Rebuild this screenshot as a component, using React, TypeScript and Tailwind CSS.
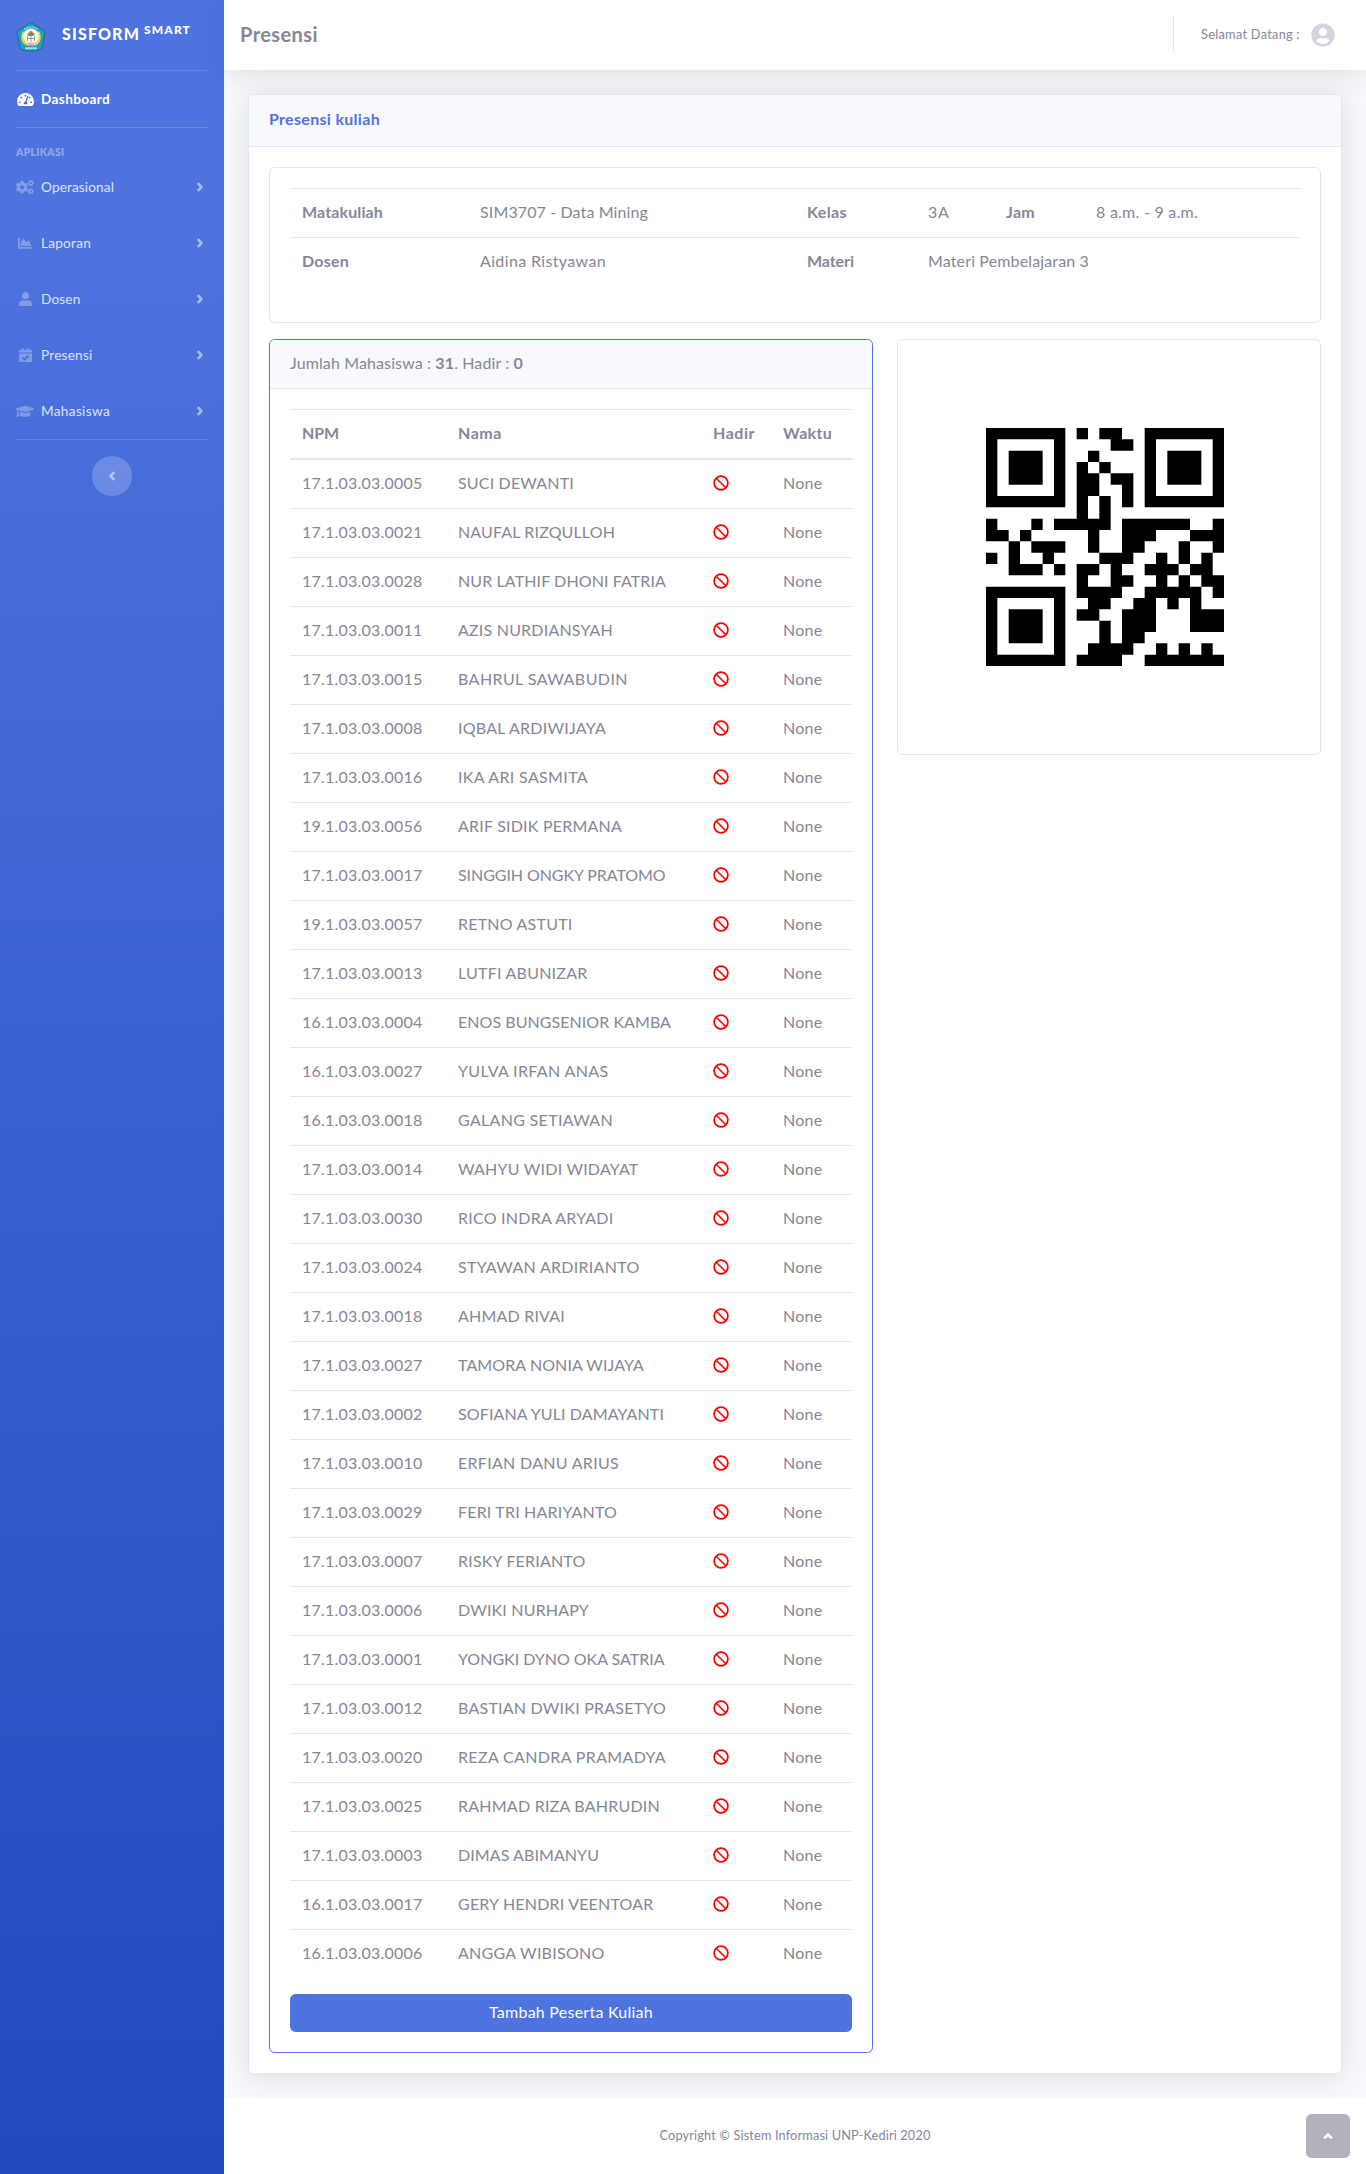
import { useLayoutEffect, useRef, useState } from "react";
import type { ReactNode } from "react";
import {
  FaCalendarCheck,
  FaChartArea,
  FaCogs,
  FaGraduationCap,
  FaTachometerAlt,
  FaUser,
  FaUserCircle,
} from "react-icons/fa";

/** One line of text whose tracking is adjusted so that it fills `w` pixels. */
function Fit({ w, className = "-top-px", children }: { w: number; className?: string; children: ReactNode }) {
  const ref = useRef<HTMLSpanElement>(null);
  const [spacing, setSpacing] = useState(0);
  useLayoutEffect(() => {
    const el = ref.current;
    if (!el) return;
    el.style.letterSpacing = "0px";
    const count = (el.textContent ?? "").length;
    const next = (w - el.getBoundingClientRect().width) / Math.max(count, 1);
    el.style.letterSpacing = `${next}px`;
    setSpacing(next);
  }, [w]);
  return (
    <span
      ref={ref}
      className={`relative inline-block whitespace-nowrap ${className}`}
      style={{ letterSpacing: `${spacing}px` }}
    >
      {children}
    </span>
  );
}

const students: [string, string, number][] = [
  ["17.1.03.03.0005", "SUCI DEWANTI", 116],
  ["17.1.03.03.0021", "NAUFAL RIZQULLOH", 157],
  ["17.1.03.03.0028", "NUR LATHIF DHONI FATRIA", 208],
  ["17.1.03.03.0011", "AZIS NURDIANSYAH", 155],
  ["17.1.03.03.0015", "BAHRUL SAWABUDIN", 170],
  ["17.1.03.03.0008", "IQBAL ARDIWIJAYA", 148],
  ["17.1.03.03.0016", "IKA ARI SASMITA", 130],
  ["19.1.03.03.0056", "ARIF SIDIK PERMANA", 164],
  ["17.1.03.03.0017", "SINGGIH ONGKY PRATOMO", 207.5],
  ["19.1.03.03.0057", "RETNO ASTUTI", 114.5],
  ["17.1.03.03.0013", "LUTFI ABUNIZAR", 129.5],
  ["16.1.03.03.0004", "ENOS BUNGSENIOR KAMBA", 213],
  ["16.1.03.03.0027", "YULVA IRFAN ANAS", 150.5],
  ["16.1.03.03.0018", "GALANG SETIAWAN", 155],
  ["17.1.03.03.0014", "WAHYU WIDI WIDAYAT", 180.5],
  ["17.1.03.03.0030", "RICO INDRA ARYADI", 155.5],
  ["17.1.03.03.0024", "STYAWAN ARDIRIANTO", 181.5],
  ["17.1.03.03.0018", "AHMAD RIVAI", 107],
  ["17.1.03.03.0027", "TAMORA NONIA WIJAYA", 186],
  ["17.1.03.03.0002", "SOFIANA YULI DAMAYANTI", 206],
  ["17.1.03.03.0010", "ERFIAN DANU ARIUS", 161],
  ["17.1.03.03.0029", "FERI TRI HARIYANTO", 159],
  ["17.1.03.03.0007", "RISKY FERIANTO", 127.5],
  ["17.1.03.03.0006", "DWIKI NURHAPY", 131],
  ["17.1.03.03.0001", "YONGKI DYNO OKA SATRIA", 206.5],
  ["17.1.03.03.0012", "BASTIAN DWIKI PRASETYO", 208],
  ["17.1.03.03.0020", "REZA CANDRA PRAMADYA", 208],
  ["17.1.03.03.0025", "RAHMAD RIZA BAHRUDIN", 202],
  ["17.1.03.03.0003", "DIMAS ABIMANYU", 141],
  ["16.1.03.03.0017", "GERY HENDRI VEENTOAR", 195.5],
  ["16.1.03.03.0006", "ANGGA WIBISONO", 146.5],
];

const qrRows = [
  "111111101011001111111",
  "100000100001101000001",
  "101110100100001011101",
  "101110101010001011101",
  "101110101101101011101",
  "100000101100101000001",
  "111111101010101111111",
  "000000001010000000000",
  "100010111110111111001",
  "110100000100111000111",
  "001011100100110001001",
  "101001000011100101010",
  "001110101101001110110",
  "000000001001100101011",
  "111111101111001111101",
  "100000100110011010100",
  "101110101100111000111",
  "101110100010111000111",
  "101110100010110000000",
  "100000100111100101010",
  "111111101111001111111",
];

const qrPath = qrRows
  .flatMap((row, y) => [...row.matchAll(/1+/g)].map((m) => `M${m.index} ${y}h${m[0].length}v1h-${m[0].length}z`))
  .join("");

const menu = [
  { label: "Operasional", w: 73, Icon: FaCogs, size: "h-[14.5px] w-[18px]" },
  { label: "Laporan", w: 50, Icon: FaChartArea, size: "h-[14.5px] w-[14.5px]" },
  { label: "Dosen", w: 39.5, Icon: FaUser, size: "h-[14.5px] w-[13px]" },
  { label: "Presensi", w: 51.5, Icon: FaCalendarCheck, size: "h-[14.5px] w-[13px]" },
  { label: "Mahasiswa", w: 69, Icon: FaGraduationCap, size: "h-[14.5px] w-[18px]" },
];

function Chevron({ className }: { className: string }) {
  return (
    <svg viewBox="0 0 8 12" className={`h-3 w-2 ${className}`}>
      <path d="M1.700 2.200 5.500 6 1.700 9.800" fill="none" stroke="currentColor" strokeWidth="2.600" strokeLinejoin="round" />
    </svg>
  );
}

function Ban() {
  return (
    <svg viewBox="0 0 16 16" className="relative -top-px h-4 w-4 text-[#ff0000]">
      <circle cx="8" cy="8" r="6.900" fill="none" stroke="currentColor" strokeWidth="1.700" />
      <path d="M3.200 3.200 12.800 12.800" fill="none" stroke="currentColor" strokeWidth="1.600" />
    </svg>
  );
}

function Logo() {
  return (
    <svg viewBox="0 0 30 30" className="h-[30px] w-[30px]">
      <path d="M15 .6 29.2 9.500 25.800 27Q15 31.600 4.200 27L.8 9.500Z" fill="#12a3cf" stroke="#3f5f74" strokeWidth="1" strokeLinejoin="round" />
      <path d="M8 7.500Q15 2.500 22 7.500" fill="none" stroke="#bfe6f0" strokeWidth="1.300" strokeDasharray="1 .7" />
      <path d="M6.500 9.500Q2.500 20 11 23.800L15 22 19 23.800Q27.500 20 23.500 9.500Z" fill="#e6dc3c" />
      <circle cx="15" cy="14.300" r="7.800" fill="#fafafa" />
      <path d="M11 12.500Q15 7.500 19 12.500L17 14H13Z" fill="#55a35a" />
      <circle cx="15" cy="10.800" r="1.800" fill="#e05a3c" />
      <path d="M11.500 14v5M15 13v7M18.500 14v5M11.500 16.500H18.500" stroke="#858a8a" strokeWidth=".8" fill="none" />
      <path d="M11.500 20.500h7v3h-7z" fill="#f2aeb0" />
      <path d="M9.500 26.200H20.500" stroke="#e4f4f8" strokeWidth="2" strokeDasharray="1.400 .5" />
    </svg>
  );
}

function Sidebar() {
  return (
    <aside className="flex w-[224px] shrink-0 flex-col bg-linear-to-b from-[#4e73df] from-10% to-[#224abe] px-4">
      <div className="flex h-[70px] items-center">
        <div className="mt-[4px]">
          <Logo />
        </div>
        <div className="ml-4 flex items-start font-black text-white">
          <Fit w={78} className="-top-px text-[16px] leading-6">SISFORM</Fit>
          <Fit w={47} className="-top-[5px] ml-[4px] text-[12px] leading-6">SMART</Fit>
        </div>
      </div>
      <div className="h-px bg-white/15" />
      <div className="flex h-14 items-center text-white">
        <span className="flex w-[18px] justify-center">
          <FaTachometerAlt className="h-[15px] w-[17px]" />
        </span>
        <Fit w={69} className="top-0 ml-[7px] text-[13.6px] font-bold">Dashboard</Fit>
      </div>
      <div className="h-px bg-white/15" />
      <div className="flex h-8 items-end text-white/40">
        <Fit w={48.5} className="top-0 text-[10.4px] leading-4 font-black">APLIKASI</Fit>
      </div>
      <div className="-mt-px flex flex-col">
        {menu.map(({ label, w, Icon, size }) => (
          <div key={label} className="flex h-14 items-center text-white/80">
            <span className="flex w-[18px] justify-center text-white/30">
              <Icon className={`shrink-0 ${size}`} preserveAspectRatio="none" />
            </span>
            <Fit w={w} className="top-0 ml-[7px] text-[13.6px]">{label}</Fit>
            <Chevron className="mr-[4px] ml-auto text-white/50" />
          </div>
        ))}
      </div>
      <div className="h-px bg-white/15" />
      <div className="mt-4 flex h-10 w-10 items-center justify-center self-center rounded-full bg-white/20 text-white/50">
        <Chevron className="rotate-180" />
      </div>
    </aside>
  );
}

function InfoTable() {
  return (
    <table className="mb-4 w-full table-fixed border-collapse text-left">
      <colgroup>
        <col className="w-[178px]" />
        <col className="w-[327px]" />
        <col className="w-[121px]" />
        <col className="w-[78px]" />
        <col className="w-[90px]" />
        <col />
      </colgroup>
      <tbody>
        <tr className="border-t border-[#e3e6f0]">
          <th className="p-3"><Fit w={81}>Matakuliah</Fit></th>
          <td className="p-3"><Fit w={168}>SIM3707 - Data Mining</Fit></td>
          <th className="p-3"><Fit w={40}>Kelas</Fit></th>
          <td className="p-3"><Fit w={21.5}>3A</Fit></td>
          <th className="p-3"><Fit w={29}>Jam</Fit></th>
          <td className="p-3"><Fit w={102}>8 a.m. - 9 a.m.</Fit></td>
        </tr>
        <tr className="border-t border-[#e3e6f0]">
          <th className="p-3"><Fit w={47}>Dosen</Fit></th>
          <td className="p-3"><Fit w={126}>Aidina Ristyawan</Fit></td>
          <th className="p-3"><Fit w={47}>Materi</Fit></th>
          <td className="p-3" colSpan={3}><Fit w={161}>Materi Pembelajaran 3</Fit></td>
        </tr>
      </tbody>
    </table>
  );
}

function StudentTable() {
  return (
    <table className="mb-4 w-full table-fixed border-collapse text-left">
      <colgroup>
        <col className="w-[156px]" />
        <col className="w-[255px]" />
        <col className="w-[70px]" />
        <col />
      </colgroup>
      <thead>
        <tr className="border-t border-b-2 border-[#e3e6f0]">
          <th className="p-3"><Fit w={37}>NPM</Fit></th>
          <th className="p-3"><Fit w={44}>Nama</Fit></th>
          <th className="p-3"><Fit w={42}>Hadir</Fit></th>
          <th className="p-3"><Fit w={49}>Waktu</Fit></th>
        </tr>
      </thead>
      <tbody>
        {students.map(([npm, name, w], i) => (
          <tr key={i} className="border-t border-[#e3e6f0]">
            <td className="p-3"><Fit w={120.5}>{npm}</Fit></td>
            <td className="p-3"><Fit w={w}>{name}</Fit></td>
            <td className="p-3"><Ban /></td>
            <td className="p-3"><Fit w={39.5}>None</Fit></td>
          </tr>
        ))}
      </tbody>
    </table>
  );
}

export default function App() {
  return (
    <div className="flex h-[2174px] w-[1366px] overflow-hidden bg-[#f8f9fc] font-['Lato','Noto_Sans',sans-serif] text-[16px] leading-6 text-[#858796]">
      <Sidebar />
      <div className="flex min-w-0 flex-1 flex-col">
        <header className="flex h-[70px] shrink-0 items-center bg-white pr-[31px] pl-4 shadow-[0_2.4px_28px_rgba(58,59,69,0.15)]">
          <Fit w={78} className="-top-px text-[20px] font-bold">Presensi</Fit>
          <div className="ml-auto h-[38px] w-px bg-[#e3e6f0]" />
          <Fit w={99} className="-top-px ml-[27px] text-[12.8px]">Selamat Datang :</Fit>
          <FaUserCircle className="ml-[11px] h-6 w-6 text-[#d1d3e2]" />
        </header>

        <main className="flex-1 px-6 pt-6">
          <section className="rounded-[5.6px] border border-[#e3e6f0] bg-white shadow-[0_2.4px_28px_rgba(58,59,69,0.15)]">
            <div className="flex h-[52px] items-center rounded-t-[5px] border-b border-[#e3e6f0] bg-[#f8f9fc] px-5 text-[#4e73df]">
              <Fit w={111} className="-top-[2px] font-bold">Presensi kuliah</Fit>
            </div>
            <div className="p-5">
              <div className="mb-4 rounded-[5.6px] border border-[#e3e6f0] p-5">
                <InfoTable />
              </div>
              <div className="flex items-start gap-6">
                <div className="w-[604px] rounded-[5.6px] border border-[#4e73df]">
                  <div className="rounded-t-[5px] border-b border-[#e3e6f0] bg-[#f8f9fc] px-5 py-3">
                    <Fit w={233}>
                      Jumlah Mahasiswa : <b className="font-bold">31</b>. Hadir : <b className="font-bold">0</b>
                    </Fit>
                  </div>
                  <div className="p-5">
                    <StudentTable />
                    <button className="flex h-[38px] w-full items-center justify-center rounded-[5.6px] bg-[#4e73df] text-white">
                      <Fit w={164}>Tambah Peserta Kuliah</Fit>
                    </button>
                  </div>
                </div>
                <div className="flex-1 rounded-[5.6px] border border-[#e3e6f0] p-5">
                  <div className="h-[374px] w-full pt-[68px] pl-[68px]">
                    <svg viewBox="0 0 21 21" className="h-[238px] w-[238px] text-black">
                      <path d={qrPath} fill="currentColor" />
                    </svg>
                  </div>
                </div>
              </div>
            </div>
          </section>
        </main>

        <footer className="relative flex h-[76px] shrink-0 items-center justify-center bg-white">
          <Fit w={271} className="-top-px text-[12.8px]">Copyright © Sistem Informasi UNP-Kediri 2020</Fit>
          <div className="absolute right-4 bottom-4 flex h-11 w-11 items-center justify-center rounded-[5.6px] bg-[#b0b1ba] text-white">
            <Chevron className="-rotate-90" />
          </div>
        </footer>
      </div>
    </div>
  );
}
